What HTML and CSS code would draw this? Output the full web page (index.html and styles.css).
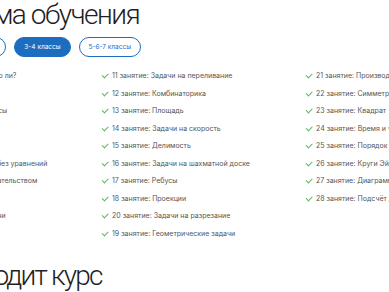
FILE: index.html
```html
<!DOCTYPE html>
<html lang="ru">
<head>
    <meta charset="UTF-8" />
    <meta name="viewport" content="width=device-width, initial-scale=1.0">
    <title>Программа обучения</title>
    <link rel="stylesheet" href="styles.css">
</head>
<body>
    <div class="page">
        <h2 class="title">Программа обучения</h2>
        <div class="tabs">
            <button class="tab">1-2 классы</button>
            <button class="tab active">3-4 классы</button>
            <button class="tab">5-6-7 классы</button>
        </div>
        <div class="lessons">
            <ul class="col">
                <li>1 занятие: Так ли? Надёжно ли?</li>
                <li>2 занятие: Графы</li>
                <li>3 занятие: Числовые ребусы</li>
                <li>4 занятие: Ряды</li>
                <li>5 занятие: Чётность</li>
                <li>6 занятие: Решим задачи без уравнений</li>
                <li>7 занятие: Задачи с доказательством</li>
                <li>8 занятие: Взвешивания</li>
                <li>9 занятие: Числовые задачи</li>
                <li>10 занятие: Логика</li>
            </ul>
            <ul class="col">
                <li>11 занятие: Задачи на переливание</li>
                <li>12 занятие: Комбинаторика</li>
                <li>13 занятие: Площадь</li>
                <li>14 занятие: Задачи на скорость</li>
                <li>15 занятие: Делимость</li>
                <li>16 занятие: Задачи на шахматной доске</li>
                <li>17 занятие: Ребусы</li>
                <li>18 занятие: Проекции</li>
                <li>20 занятие: Задачи на разрезание</li>
                <li>19 занятие: Геометрические задачи</li>
            </ul>
            <ul class="col">
                <li>21 занятие: Производительность</li>
                <li>22 занятие: Симметрия</li>
                <li>23 занятие: Квадрат</li>
                <li>24 занятие: Время и часы</li>
                <li>25 занятие: Порядок действий</li>
                <li>26 занятие: Круги Эйлера</li>
                <li>27 занятие: Диаграммы</li>
                <li>28 занятие: Подсчёт денег</li>
            </ul>
        </div>
        <h2 class="title second">Кто проводит курс</h2>
    </div>
</body>
</html>
```

FILE: styles.css
```css
* {
    margin: 0;
    padding: 0;
    box-sizing: border-box;
}

body {
    background-color: #fff;
    overflow: hidden;
    font-family: "Inter", "Open Sans", sans-serif;
    color: #222;
}

.page {
    width: 640px;
    margin-left: -103px;
}

.title {
    margin-left: -7.5px;
    font-family: "Roboto", sans-serif;
    font-weight: 300;
    font-size: 28px;
    line-height: 30px;
    color: #1f1f1f;
    white-space: nowrap;
    letter-spacing: -1.5px;
}

.second {
    margin-top: 19px;
    margin-left: -4px;
    letter-spacing: -1.8px;
}

.tabs {
    display: flex;
    gap: 8px;
    margin-top: 7px;
    margin-left: 55px;
}

.tab {
    height: 20px;
    padding: 0 9px;
    border: 1px solid #1c6dbf;
    border-radius: 9999px;
    background-color: #fff;
    color: #1c6dbf;
    font-family: "Inter", sans-serif;
    font-size: 6.5px;
    white-space: nowrap;
}

.tab.active {
    background-color: #1c6dbf;
    color: #fff;
}

.lessons {
    display: grid;
    grid-template-columns: repeat(3, 204px);
    margin-top: 10px;
}

.col {
    list-style: none;
}

.col li {
    display: flex;
    align-items: center;
    height: 17.5px;
    font-size: 7px;
    color: #555;
    white-space: nowrap;
}

.col li::before {
    content: "";
    width: 5px;
    height: 2.5px;
    margin: 0 4px 2px 1px;
    border-left: 1px solid #5cb85c;
    border-bottom: 1px solid #5cb85c;
    transform: rotate(-45deg);
    flex-shrink: 0;
}
```
